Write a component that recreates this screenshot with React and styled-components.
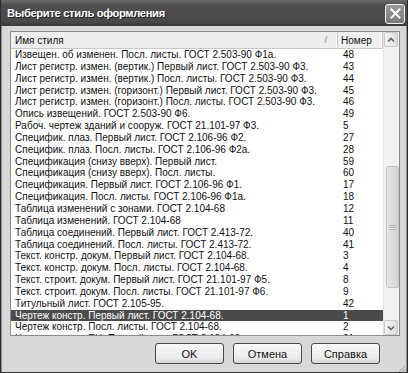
import React from "react";
import styled, { createGlobalStyle } from "styled-components";

const Global = createGlobalStyle`
  html, body { margin: 0; padding: 0; background: #d9d9d9; }
  #root { width: 408px; height: 373px; }
`;

const Window = styled.div`
  position: relative;
  box-sizing: border-box;
  width: 408px;
  height: 373px;
  display: flex;
  flex-direction: column;
  background: #d8d8d8;
  border: 1px solid #2e2e2e;
  border-top: none;
  font-family: "Liberation Sans", Arial, sans-serif;
  overflow: hidden;
`;

const TitleBar = styled.div`
  height: 26px;
  flex: none;
  display: flex;
  align-items: center;
  justify-content: space-between;
  padding: 0 2px 0 6px;
  background: linear-gradient(#6a6a6a, #4e4e4e 20%, #4a4a4a 80%, #3c3c3c);
`;

const Title = styled.div`
  color: #fff;
  font-weight: bold;
  font-size: 11.2px;
  letter-spacing: -0.35px;
  text-shadow: 1px 1px 0 #222;
`;

const CloseBtn = styled.div`
  width: 20px;
  height: 20px;
  box-sizing: border-box;
  border: 1px solid #eee;
  border-radius: 3px;
  background: linear-gradient(#9a9a9a, #7a7a7a);
  display: flex;
  align-items: center;
  justify-content: center;
  margin-top: 1px;
`;

const Body = styled.div`
  flex: 1;
  display: flex;
  flex-direction: column;
  padding: 5px 6px 6px 8px;
  border-left: 1px solid #8a8a8a;
  border-right: 1px solid #8a8a8a;
`;

const ListBox = styled.div`
  box-sizing: border-box;
  height: 305px;
  border: 1px solid #8c8c8c;
  background: #fff;
  display: grid;
  grid-template-columns: 1fr 16px;
  overflow: hidden;
`;

const ListMain = styled.div`
  display: flex;
  flex-direction: column;
  overflow: hidden;
`;

const HeaderRow = styled.div`
  height: 16px;
  flex: none;
  display: grid;
  grid-template-columns: 327px 1fr;
  background: #eeeeee;
  border-bottom: 1px solid #c8c8c8;
  font-size: 10px;
  color: #111;
`;

const HeaderCell = styled.div`
  display: flex;
  align-items: center;
  justify-content: space-between;
  padding: 0 ${(p) => (p.$sort ? "10px" : "3px")} 0 ${(p) => (p.$first ? "4px" : "3px")};
  border-right: 1px solid #c4c4c4;
  box-shadow: inset -1px 0 0 #fff;
`;

const SortMark = styled.span`
  color: #777;
  font-size: 9px;
`;

const Row = styled.div`
  height: 11.85px;
  flex: none;
  display: grid;
  grid-template-columns: 327px 1fr;
  align-items: center;
  font-size: 10px;
  line-height: 11.85px;
  color: ${(p) => (p.$sel ? "#fff" : "#111")};
  background: ${(p) => (p.$sel ? "#4b4b4b" : "transparent")};
  white-space: nowrap;
`;

const Cell = styled.div`
  padding-left: ${(p) => (p.$num ? "5px" : "4px")};
  overflow: hidden;
`;

const ScrollBar = styled.div`
  display: flex;
  flex-direction: column;
  background: #f0f0f0;
  border-left: 1px solid #e4e4e4;
`;

const ScrollBtn = styled.div`
  height: 15px;
  flex: none;
  box-sizing: border-box;
  margin: 0 1px 0 0;
  border: 1px solid #c9c9c9;
  border-radius: 2px;
  background: linear-gradient(90deg, #f4f4f4, #dcdcdc);
  display: flex;
  align-items: center;
  justify-content: center;
`;

const Track = styled.div`
  flex: 1;
  display: flex;
  flex-direction: column;
  padding: 119px 0 32px 2px;
`;

const Thumb = styled.div`
  flex: 1;
  box-sizing: border-box;
  border: 1px solid #c4c4c4;
  border-radius: 2px;
  background: linear-gradient(90deg, #e6e6e6, #d4d4d4);
  display: flex;
  align-items: center;
  justify-content: center;
`;

const Buttons = styled.div`
  display: flex;
  justify-content: flex-end;
  gap: 9px;
  margin-top: 7px;
  padding-right: 20px;
`;

const Button = styled.div`
  width: 69px;
  height: 21px;
  box-sizing: border-box;
  border: 1px solid #4a4a4a;
  border-radius: 3px;
  background: linear-gradient(#fafafa, #ececec 70%, #d6d6d6);
  display: flex;
  align-items: center;
  justify-content: center;
  font-size: 11px;
  color: #111;
`;

const Grip = styled.div`
  position: absolute;
  right: 1px;
  bottom: 1px;
  width: 10px;
  height: 10px;
`;

const rows = [
  ["Извещен. об изменен. Посл. листы. ГОСТ 2.503-90 Ф1а.", "48"],
  ["Лист регистр. измен. (вертик.) Первый лист. ГОСТ 2.503-90 Ф3.", "43"],
  ["Лист регистр. измен. (вертик.) Посл. листы. ГОСТ 2.503-90 Ф3.", "44"],
  ["Лист регистр. измен. (горизонт.) Первый лист. ГОСТ 2.503-90 Ф3.", "45"],
  ["Лист регистр. измен. (горизонт.) Посл. листы. ГОСТ 2.503-90 Ф3.", "46"],
  ["Опись извещений. ГОСТ 2.503-90 Ф6.", "49"],
  ["Рабоч. чертеж зданий и сооруж. ГОСТ 21.101-97 Ф3.", "5"],
  ["Специфик. плаз. Первый лист. ГОСТ 2.106-96 Ф2.", "27"],
  ["Специфик. плаз. Посл. листы. ГОСТ 2.106-96 Ф2а.", "28"],
  ["Спецификация (снизу вверх). Первый лист.", "59"],
  ["Спецификация (снизу вверх). Посл. листы.", "60"],
  ["Спецификация. Первый лист. ГОСТ 2.106-96 Ф1.", "17"],
  ["Спецификация. Посл. листы. ГОСТ 2.106-96 Ф1а.", "18"],
  ["Таблица изменений с зонами. ГОСТ 2.104-68", "12"],
  ["Таблица изменений. ГОСТ 2.104-68", "11"],
  ["Таблица соединений. Первый лист. ГОСТ 2.413-72.", "40"],
  ["Таблица соединений. Посл. листы. ГОСТ 2.413-72.", "41"],
  ["Текст. констр. докум. Первый лист. ГОСТ 2.104-68.", "3"],
  ["Текст. констр. докум. Посл. листы. ГОСТ 2.104-68.", "4"],
  ["Текст. строит. докум. Первый лист. ГОСТ 21.101-97 Ф5.", "8"],
  ["Текст. строит. докум. Посл. листы. ГОСТ 21.101-97 Ф6.", "9"],
  ["Титульный лист. ГОСТ 2.105-95.", "42"],
  ["Чертеж констр. Первый лист. ГОСТ 2.104-68.", "1"],
  ["Чертеж констр. Посл. листы. ГОСТ 2.104-68.", "2"],
  ["Чертеж констр. ЕН. Первый лист. ГОСТ 2.104-68.", "21"],
];

export default function App() {
  return (
    <>
      <Global />
      <Window>
        <TitleBar>
          <Title>Выберите стиль оформления</Title>
          <CloseBtn>
            <svg width="11" height="11" viewBox="0 0 11 11">
              <path d="M1.5 1.5 L9.5 9.5 M9.5 1.5 L1.5 9.5" stroke="#fff" strokeWidth="2" strokeLinecap="square" />
            </svg>
          </CloseBtn>
        </TitleBar>
        <Body>
          <ListBox>
            <ListMain>
              <HeaderRow>
                <HeaderCell $first $sort>
                  <span>Имя стиля</span>
                  <SortMark>/</SortMark>
                </HeaderCell>
                <HeaderCell>Номер</HeaderCell>
              </HeaderRow>
              {rows.map(([name, num], i) => (
                <Row key={i} $sel={i === 22}>
                  <Cell>{name}</Cell>
                  <Cell $num>{num}</Cell>
                </Row>
              ))}
            </ListMain>
            <ScrollBar>
              <ScrollBtn>
                <svg width="8" height="6" viewBox="0 0 8 6">
                  <path d="M1 4.5 L4 1.5 L7 4.5" fill="none" stroke="#666" strokeWidth="1.6" />
                </svg>
              </ScrollBtn>
              <Track>
                <Thumb>
                  <svg width="7" height="7" viewBox="0 0 7 7">
                    <path d="M0 1.5 H7 M0 3.5 H7 M0 5.5 H7" stroke="#bbb" strokeWidth="1" />
                  </svg>
                </Thumb>
              </Track>
              <ScrollBtn>
                <svg width="8" height="6" viewBox="0 0 8 6">
                  <path d="M1 1.5 L4 4.5 L7 1.5" fill="none" stroke="#666" strokeWidth="1.6" />
                </svg>
              </ScrollBtn>
            </ScrollBar>
          </ListBox>
          <Buttons>
            <Button>OK</Button>
            <Button>Отмена</Button>
            <Button>Справка</Button>
          </Buttons>
        </Body>
        <Grip>
          <svg width="10" height="10" viewBox="0 0 10 10">
            <path d="M9 1 L1 9 M9 4 L4 9 M9 7 L7 9" stroke="#999" strokeWidth="1" />
          </svg>
        </Grip>
      </Window>
    </>
  );
}
